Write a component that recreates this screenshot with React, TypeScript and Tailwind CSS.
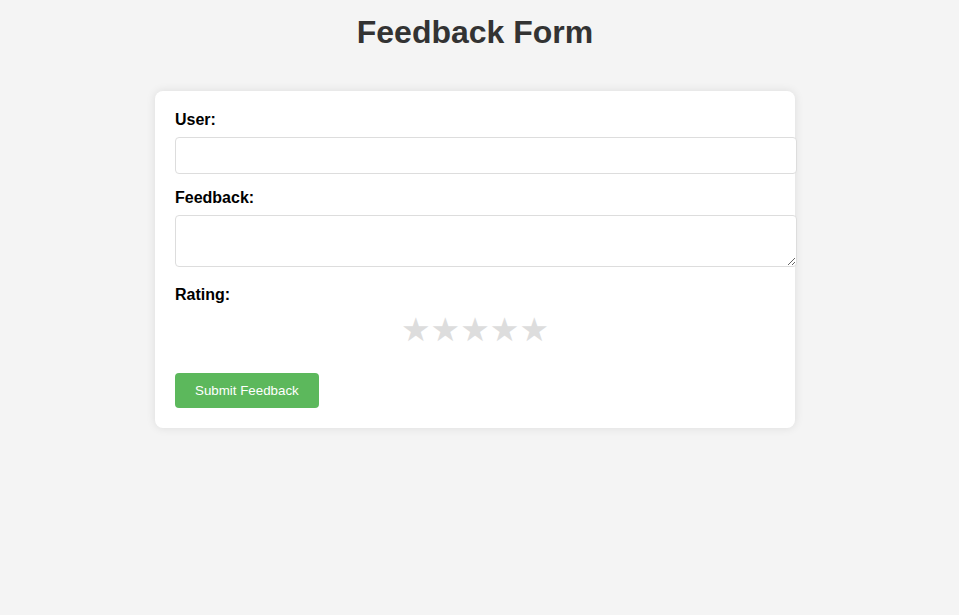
import React from "react";

export default function App() {
  return (
    <div
      className="min-h-screen bg-[#f4f4f4] pr-[9px] pt-[14px]"
      style={{ fontFamily: '"Liberation Sans", Arial, sans-serif' }}
    >
      <h1 className="text-center text-[32px] font-bold leading-[37px] text-[#333]">
        Feedback Form
      </h1>
      <div className="mx-auto mt-[40px] w-[640px] rounded-lg bg-white p-5 shadow-[0_0_10px_rgba(0,0,0,0.1)]">
        <label className="block text-base font-bold leading-[18.4px] text-black mb-[8px]">
          User:
        </label>
        <input
          type="text"
          className="block h-[37px] w-[622px] rounded border border-[#ddd] bg-white px-[10px] text-[13.333px] mb-[15px]"
        />
        <label className="block text-base font-bold leading-[18.4px] text-black mb-[7px]">
          Feedback:
        </label>
        <textarea className="block h-[52px] w-[622px] rounded border border-[#ddd] bg-white p-[10px] text-[13.333px] mb-[19px]" />
        <label className="block text-base font-bold leading-[18.4px] text-black">
          Rating:
        </label>
        <div
          className="mt-[6px] mb-[23px] flex h-[40px] items-center justify-center text-[33px] text-[#ddd]"
          style={{ fontFamily: '"DejaVu Sans", sans-serif' }}
        >
          <span>★</span>
          <span>★</span>
          <span>★</span>
          <span>★</span>
          <span>★</span>
        </div>
        <button className="h-[35px] rounded bg-[#5cb85c] px-5 text-[13.333px] text-white">
          Submit Feedback
        </button>
      </div>
    </div>
  );
}
